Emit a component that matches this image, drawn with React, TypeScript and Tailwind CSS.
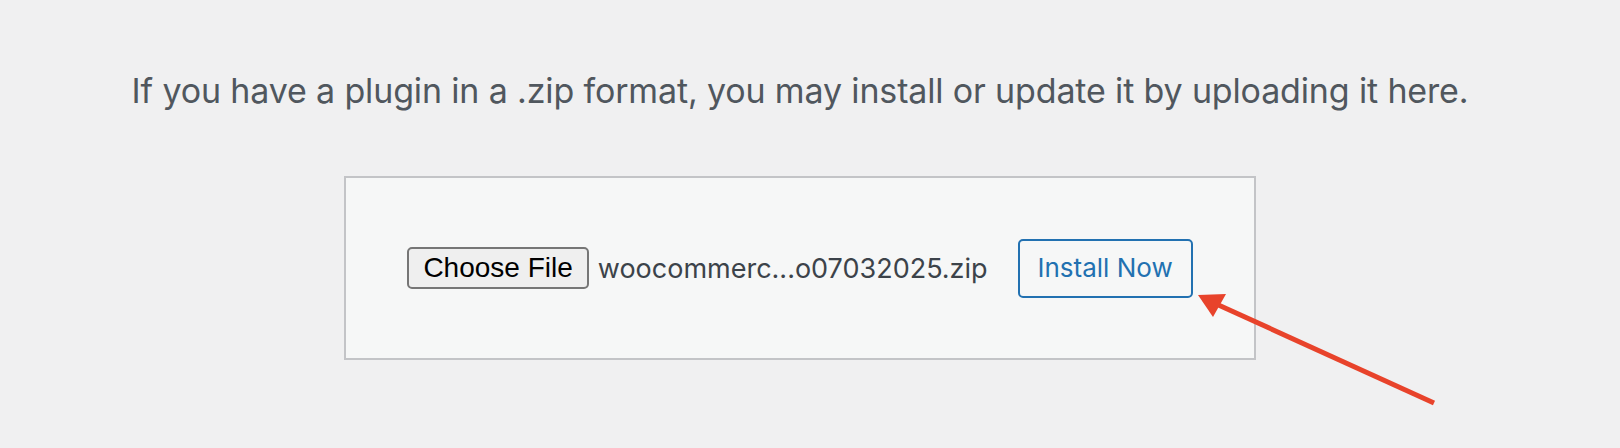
import React from 'react';

const App: React.FC = () => {
  return (
    <div className="relative w-[1620px] h-[448px] bg-[#f0f0f1] overflow-hidden font-['Inter','Liberation_Sans',sans-serif]">
      <div className="w-[1600px] flex flex-col items-center">
        {/* Help text */}
        <p className="mt-[67px] text-[34px] leading-[48px] text-[#50575e] tracking-[-0.15px]">
          If you have a plugin in a .zip format, you may install or update it by uploading it here.
        </p>

        {/* Upload form */}
        <form
          className="mt-[61px] w-[912px] h-[184px] bg-[#f6f7f7] border-2 border-[#c3c4c7] flex items-center justify-center"
          onSubmit={(e) => e.preventDefault()}
        >
          <button
            type="button"
            className="h-[42px] px-[14px] bg-[#efefef] border-2 border-[#767676] rounded-[5px] text-[28px] leading-none text-black font-['Liberation_Sans',Arial,sans-serif]"
          >
            Choose File
          </button>
          <span className="ml-[9px] text-[27px] text-[#3c434a] leading-none">woocommerc...o07032025.zip</span>
          <button
            type="submit"
            className="ml-[30px] w-[175px] h-[59px] border-2 border-[#2271b1] rounded-[5px] text-[26px] leading-none text-[#2271b1] bg-[#f6f7f7]"
          >
            Install Now
          </button>
        </form>
      </div>

      {/* Annotation arrow */}
      <svg className="absolute left-0 top-0 pointer-events-none" width="1620" height="448" viewBox="0 0 1620 448">
        <line x1="1434" y1="403" x2="1214" y2="303" stroke="#e8432b" strokeWidth="5" strokeLinecap="butt" />
        <polygon points="1198,295 1226,294 1213,317" fill="#e8432b" />
      </svg>
    </div>
  );
};

export default App;
